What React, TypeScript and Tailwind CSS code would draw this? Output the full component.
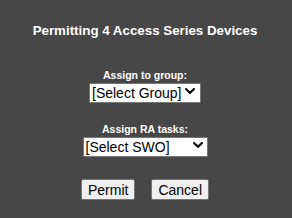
import React from 'react';

function Chevron({ right }: { right: string }) {
    return (
        <svg
            className={`pointer-events-none absolute top-[7px] ${right}`}
            width="10"
            height="6"
            viewBox="0 0 10 6"
            fill="none"
        >
            <path d="M1.2 1.2 L5 4.8 L8.8 1.2" stroke="#000" strokeWidth="2.2" strokeLinecap="square" />
        </svg>
    );
}

function Dropdown({ label, value, width, chevronRight }: { label: string; value: string; width: string; chevronRight: string }) {
    return (
        <div className="flex flex-col items-center">
            <div className="text-[10.5px] leading-[12px] font-bold text-white">{label}</div>
            <div className={`relative ${width}`}>
                <select
                    defaultValue={value}
                    className="appearance-none w-full h-[20px] bg-white border border-[#767676] rounded-[1px] pl-[2px] pr-[18px] text-[14px] leading-[18px] text-black outline-none"
                >
                    <option>{value}</option>
                </select>
                <Chevron right={chevronRight} />
            </div>
        </div>
    );
}

export default function App() {
    return (
        <div
            className="w-[292px] h-[218px] bg-[#474747] pr-[2px] flex flex-col items-center"
            style={{ fontFamily: '"Liberation Sans", Arial, sans-serif' }}
        >
            {/* Title */}
            <h1 className="mt-[23px] text-[13.33px] leading-[16px] font-bold text-white">
                Permitting 4 Access Series Devices
            </h1>

            <div className="mt-[30px]">
                <Dropdown label="Assign to group:" value="[Select Group]" width="w-[112px]" chevronRight="right-[6px]" />
            </div>

            <div className="mt-[18px]">
                <Dropdown label="Assign RA tasks:" value="[Select SWO]" width="w-[125px]" chevronRight="right-[5px]" />
            </div>

            {/* Actions */}
            <div className="mt-[20px] flex gap-[16px]">
                <button className="h-[21px] px-[6px] bg-[#efefef] border border-[#767676] rounded-[2px] text-[14px] leading-[18px] text-black">
                    Permit
                </button>
                <button className="h-[21px] px-[6px] bg-[#efefef] border border-[#767676] rounded-[2px] text-[14px] leading-[18px] text-black">
                    Cancel
                </button>
            </div>
        </div>
    );
}
